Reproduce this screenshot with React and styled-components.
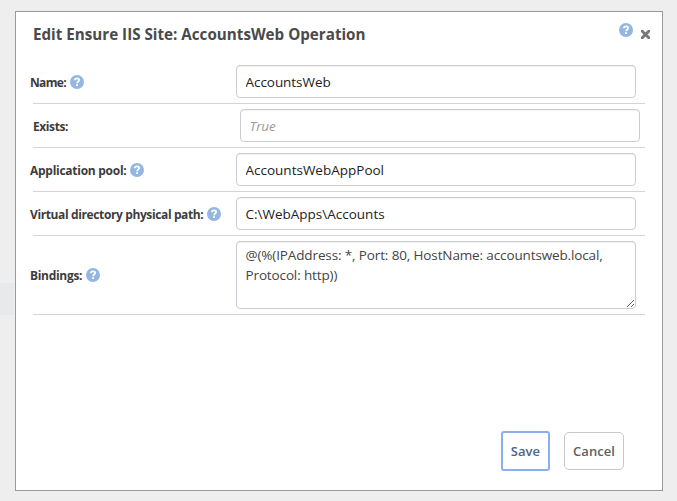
import React from "react";
import styled, { createGlobalStyle, css } from "styled-components";

const GlobalStyle = createGlobalStyle`
  *, *::before, *::after { box-sizing: border-box; }
  body {
    margin: 0;
    background: #eeeeee;
    font-family: "Segoe UI", "Open Sans", sans-serif;
  }
`;

const Page = styled.main`
  position: relative;
  display: flex;
  height: 501px;
  padding: 11px 14px 10px 15px;
  overflow: hidden;
`;

const PageBand = styled.div`
  position: absolute;
  left: 0;
  top: 283px;
  width: 14px;
  height: 32px;
  background: #e8e9eb;
`;

const Dialog = styled.section`
  position: relative;
  display: flex;
  flex-direction: column;
  width: 648px;
  height: 480px;
  background: #fff;
  border: 1px solid #999;
`;

const Header = styled.header`
  display: flex;
  align-items: flex-start;
  height: 48px;
  padding: 11px 12px 0 17px;
`;

const Title = styled.h1`
  flex: 1;
  margin: 0;
  font-size: 15.2px;
  line-height: 23px;
  font-weight: 700;
  color: #4a4a4a;
`;

const HeaderActions = styled.div`
  display: flex;
  align-items: flex-start;
  gap: 8px;
`;

const CloseButton = styled.button`
  display: flex;
  margin: 7px 0 0;
  padding: 0;
  border: 0;
  background: none;
`;

const Form = styled.form`
  display: flex;
  flex: 1;
  flex-direction: column;
  margin: 0 17px;
`;

const Row = styled.div`
  display: flex;
  align-items: center;
  height: ${(p) => (p.$tall ? 79 : 44)}px;
  border-bottom: 1px solid #d5d5d5;
`;

const LabelCell = styled.div`
  display: flex;
  align-items: center;
  gap: 4px;
  width: ${(p) => (p.$plain ? 207 : 206)}px;
  margin-left: ${(p) => (p.$plain ? 0 : -3)}px;
  padding-top: 2px;
`;

const Label = styled.label`
  font-size: 12px;
  line-height: 18px;
  font-weight: 700;
  letter-spacing: ${(p) => p.$tracking}px;
  white-space: nowrap;
  color: #3c3c3c;
`;

const HelpMark = styled.svg`
  display: block;
  flex: none;
`;

const LabelHelp = styled.span`
  display: flex;
  margin-top: -2px;
`;

const fieldStyle = css`
  flex: none;
  width: 400px;
  margin: 0;
  border: 1px solid #c9ccd1;
  border-radius: 4px;
  outline: none;
  background: #fff;
  box-shadow: inset 0 1px 1px rgba(0, 0, 0, 0.05);
  font-family: inherit;
  font-size: 13.5px;
  letter-spacing: ${(p) => p.$tracking || 0}px;
`;

const TextField = styled.input`
  ${fieldStyle}
  height: 33px;
  padding: 0 8px 0 8.5px;
  color: #222;

  &::placeholder {
    color: #999;
    font-style: italic;
    opacity: 1;
  }
`;

const TextArea = styled.textarea`
  ${fieldStyle}
  height: 68px;
  padding: 3px 8px 3px 8.5px;
  line-height: 20px;
  color: #444;
`;

const Actions = styled.footer`
  display: flex;
  justify-content: flex-end;
  align-items: center;
  gap: 14px;
  margin-bottom: 19px;
  padding-right: 38px;
`;

const Button = styled.button`
  width: ${(p) => (p.$primary ? 49 : 60)}px;
  height: ${(p) => (p.$primary ? 40 : 38)}px;
  padding: 0;
  border: ${(p) => (p.$primary ? "2px solid #8aaef2" : "1px solid #c8c8c8")};
  border-radius: ${(p) => (p.$primary ? 3 : 5)}px;
  background: #fff;
  font-family: inherit;
  font-size: 13px;
  font-weight: 600;
  letter-spacing: 0.05px;
  color: ${(p) => (p.$primary ? "#4c6387" : "#606060")};
`;

function Help() {
  return (
    <HelpMark width="14" height="14" viewBox="0 0 14 14" aria-label="Help">
      <circle cx="7" cy="7" r="7" fill="#94b6e2" />
      <path
        d="M4.800 5.200C4.900 3.900 5.800 3.400 7 3.400c1.400 0 2.200.7 2.200 1.700 0 1.400-2.100 1.500-2.100 3.200"
        fill="none"
        stroke="#fff"
        strokeWidth="1.700"
      />
      <rect x="6.100" y="9.200" width="1.900" height="1.800" fill="#fff" />
    </HelpMark>
  );
}

function Close() {
  return (
    <svg width="9" height="9" viewBox="0 0 9 9" aria-label="Close">
      <path d="M1.200 1.200 7.800 7.800M7.800 1.200 1.200 7.800" stroke="#777" strokeWidth="2.900" strokeLinecap="square" />
    </svg>
  );
}

const fields = [
  { label: "Name:", value: "AccountsWeb", help: true, labelTracking: -0.65, tracking: -0.05 },
  { label: "Exists:", placeholder: "True", labelTracking: -0.4, tracking: -0.1 },
  { label: "Application pool:", value: "AccountsWebAppPool", help: true, labelTracking: -0.27, tracking: 0 },
  { label: "Virtual directory physical path:", value: "C:\\WebApps\\Accounts", help: true, labelTracking: -0.38, tracking: 0 },
  {
    label: "Bindings:",
    value: "@(%(IPAddress: *, Port: 80, HostName: accountsweb.local, Protocol: http))",
    help: true,
    tall: true,
    labelTracking: -0.3,
    tracking: -0.13,
  },
];

export default function App() {
  return (
    <>
      <GlobalStyle />
      <Page>
        <PageBand />
        <Dialog role="dialog">
          <Header>
            <Title>Edit Ensure IIS Site: AccountsWeb Operation</Title>
            <HeaderActions>
              <Help />
              <CloseButton type="button">
                <Close />
              </CloseButton>
            </HeaderActions>
          </Header>
          <Form>
            {fields.map((f, i) => (
              <Row key={f.label} $tall={f.tall}>
                <LabelCell $plain={!f.help}>
                  <Label htmlFor={`field-${i}`} $tracking={f.labelTracking}>{f.label}</Label>
                  {f.help && (
                    <LabelHelp>
                      <Help />
                    </LabelHelp>
                  )}
                </LabelCell>
                {f.tall ? (
                  <TextArea id={`field-${i}`} defaultValue={f.value} $tracking={f.tracking} spellCheck={false} />
                ) : (
                  <TextField
                    id={`field-${i}`}
                    defaultValue={f.value}
                    placeholder={f.placeholder}
                    $tracking={f.tracking}
                    spellCheck={false}
                  />
                )}
              </Row>
            ))}
          </Form>
          <Actions>
            <Button type="button" $primary>Save</Button>
            <Button type="button">Cancel</Button>
          </Actions>
        </Dialog>
      </Page>
    </>
  );
}
